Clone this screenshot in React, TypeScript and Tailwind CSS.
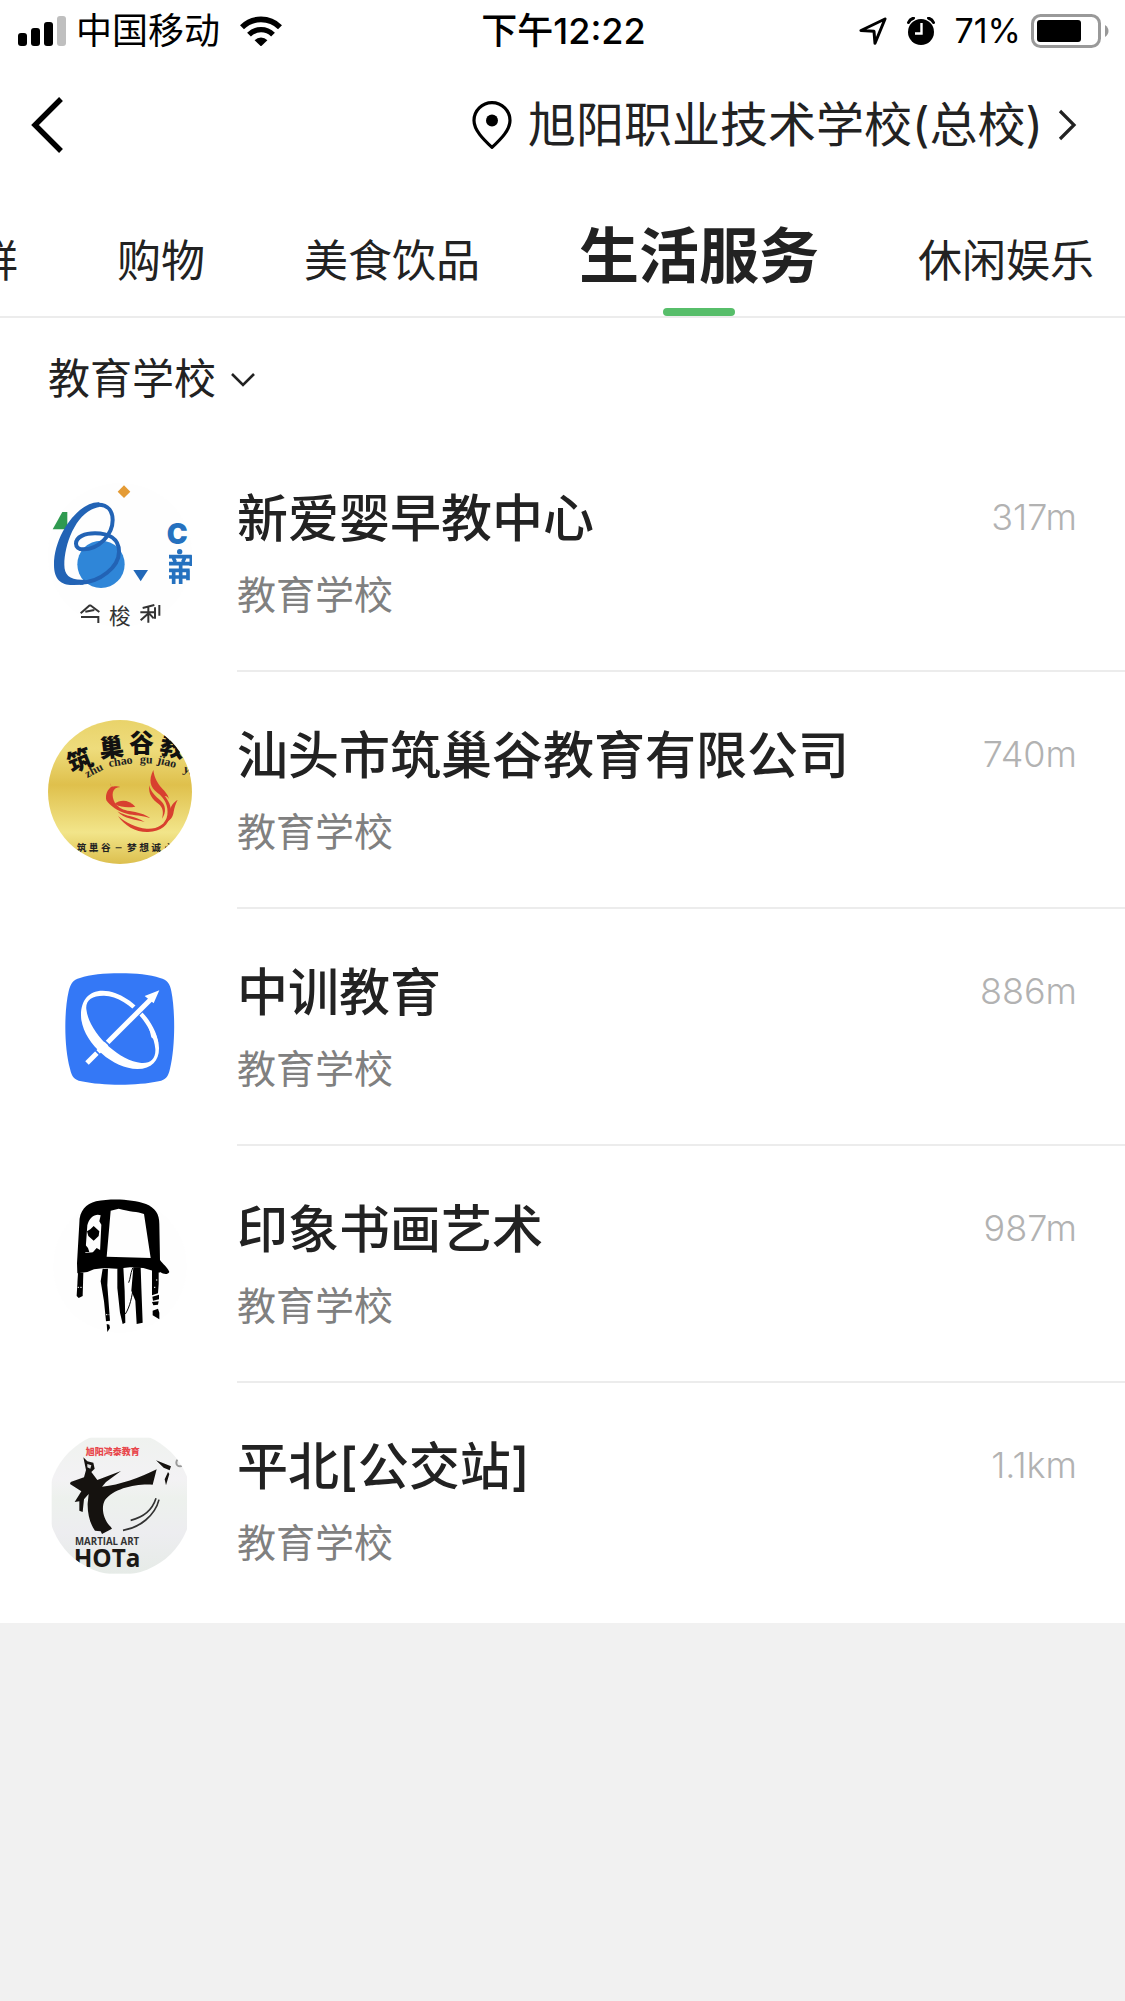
import React, { useState } from 'react';

const tabs = ['生鲜', '购物', '美食饮品', '生活服务', '休闲娱乐'];

function SignalIcon() {
  return (
    <svg className="w-12 h-[30px]" viewBox="0 0 48 30" aria-hidden="true">
      <rect x="0" y="17" width="9" height="13" rx="3" />
      <rect x="13" y="12" width="9" height="18" rx="3" />
      <rect x="26" y="6" width="9" height="24" rx="3" />
      <rect x="39" y="0" width="9" height="30" rx="3" fill="#bfbfbf" />
    </svg>
  );
}

function WifiIcon() {
  return (
    <svg className="w-[42px] h-[30px]" viewBox="0 0 42 30" fill="none" stroke="#000" aria-hidden="true">
      <path d="M2 11.2a27 27 0 0 1 38 0" strokeWidth="5.6" />
      <path d="M9 18.6a17 17 0 0 1 24 0" strokeWidth="5.4" />
      <path d="M14.6 24.2a9.2 9.2 0 0 1 12.8 0L21 30.4z" fill="#000" stroke="none" />
    </svg>
  );
}

function ArrowIcon() {
  return (
    <svg className="w-7 h-7" viewBox="0 0 28 28" fill="none" stroke="#000" strokeWidth="3" strokeLinejoin="round" aria-hidden="true">
      <path d="M26 2L2 13.500l13 .8 1 12z" />
    </svg>
  );
}

function AlarmIcon() {
  return (
    <svg className="w-7 h-7" viewBox="0 0 28 28" aria-hidden="true">
      <circle cx="14" cy="15" r="13" />
      <path d="M1.5 5.5Q3 2 6.5 1.2M26.5 5.5Q25 2 21.5 1.2" fill="none" stroke="#000" strokeWidth="3" strokeLinecap="round" />
      <path d="M14.5 6v10.5H8" fill="none" stroke="#fff" strokeWidth="2.4" />
    </svg>
  );
}

function BatteryIcon() {
  return (
    <svg className="w-[78px] h-[34px]" viewBox="0 0 78 34" aria-hidden="true">
      <rect x="1.5" y="1.5" width="67" height="31" rx="8" fill="none" stroke="#999" strokeWidth="3" />
      <path d="M74 11q3.5 2.5 3.5 6T74 23z" fill="#999" />
      <rect x="6" y="6" width="44" height="22" rx="3" />
    </svg>
  );
}

function StatusBar() {
  return (
    <div className="grid h-[62px] grid-cols-[1fr_auto_1fr] items-center pl-[18px] pr-4 text-[36px] leading-none text-black">
      <div className="flex items-center">
        <SignalIcon />
        <span className="ml-2.5 mr-5">中国移动</span>
        <WifiIcon />
      </div>
      <span className="font-medium">下午12:22</span>
      <div className="flex items-center justify-end">
        <ArrowIcon />
        <span className="w-5" />
        <AlarmIcon />
        <span className="ml-5 mr-2.5 text-[34px]">71%</span>
        <BatteryIcon />
      </div>
    </div>
  );
}

function Header() {
  return (
    <header className="flex h-[126px] items-center justify-between pl-[31px] pr-12">
      <button type="button" aria-label="返回">
        <svg className="h-14 w-8" viewBox="0 0 32 56" fill="none" stroke="#000" strokeWidth="5.4">
          <path d="M30 2L4 28l26 26" />
        </svg>
      </button>
      <button type="button" className="flex items-center text-[48px] leading-none">
        <svg className="mr-4 h-12 w-10" viewBox="0 0 40 48" fill="none" stroke="#000" strokeWidth="3.2" aria-hidden="true">
          <path d="M20 46.4C11 38 2 29 2 19.5a18 17.8 0 0 1 36 0C38 29 29 38 20 46.4z" strokeLinejoin="round" />
          <circle cx="20" cy="19.5" r="6" fill="#000" stroke="none" />
        </svg>
        <span>旭阳职业技术学校(总校)</span>
        <svg className="ml-3.5 h-8 w-5" viewBox="0 0 20 32" fill="none" stroke="#222" strokeWidth="3.2" aria-hidden="true">
          <path d="M3 2l14 14L3 30" />
        </svg>
      </button>
    </header>
  );
}

function KidsAvatar() {
  return (
    <svg viewBox="54 39 432 432" className="h-full w-full">
      <circle cx="270" cy="255" r="216" fill="#fefefe" />
      <path d="M282 46l19 19-19 19-19-19z" fill="#e49b35" />
      <path d="M97 126h15v52H68z" fill="#2f9a50" />
      <circle cx="213" cy="283" r="71" fill="#2f86d8" />
      <path
        d="M205 104C235 104 248 125 248 150C248 195 205 238 160 238C145 238 138 230 138 221C138 200 165 190 195 190C235 190 267 205 267 245C267 290 210 338 150 338"
        fill="none"
        stroke="#2263b5"
        strokeWidth="12"
      />
      <path d="M208 97C150 93 72 190 72 285C72 330 95 346 130 345L160 344L165 329C120 332 103 316 103 285C103 220 140 122 208 111z" fill="#2263b5" />
      <path d="M310 300h44l-22 34z" fill="#2268b8" />
      <text x="410" y="221" fontSize="84" fontWeight="900" fill="#2571bf">C</text>
      <circle cx="449" cy="245" r="8" fill="#2571bf" />
      <path
        d="M417 260h68M430 264l6 12M464 264l-6 12M417 281h68M417 301h62M431 301v41M452 281v61M417 321h58M474 301v30M484 256v32"
        stroke="#2571bf"
        strokeWidth="11"
        fill="none"
      />
      <g stroke="#333" strokeWidth="6" fill="none">
        <path d="M180 405l-28 25M180 405l28 21M166 425l27-5M153 441h52v18" />
        <path d="M373 405l-35 9M355 410v48M331 427h42M354 431l-22 20M358 431l13 14M375 412v34M388 405v32" />
      </g>
      <text x="237" y="461" fontSize="65" fill="#333">梭</text>
    </svg>
  );
}

function PhoenixAvatar() {
  return (
    <svg viewBox="54 60 432 432" className="h-full w-full">
      <defs>
        <linearGradient id="gold" x1="0" y1="0" x2="0" y2="1">
          <stop offset="0" stopColor="#e9d36a" />
          <stop offset="0.2" stopColor="#eedc7c" />
          <stop offset="0.45" stopColor="#dfc04c" />
          <stop offset="0.78" stopColor="#f2e58a" />
          <stop offset="1" stopColor="#dcbf4e" />
        </linearGradient>
        <clipPath id="coin">
          <circle cx="270" cy="276" r="216" />
        </clipPath>
      </defs>
      <g clipPath="url(#coin)">
        <rect x="54" y="60" width="432" height="432" fill="url(#gold)" />
        <g fontSize="74" fontWeight="900" fill="#111">
          <text x="125" y="220" transform="rotate(-22 125 220)">筑</text>
          <text x="211" y="174" transform="rotate(-7 211 174)">巢</text>
          <text x="298" y="157">谷</text>
          <text x="386" y="160" transform="rotate(12 386 160)">教</text>
        </g>
        <g fontSize="36" fontWeight="700" fill="#222" className="[font-family:'Liberation_Serif',serif]">
          <text x="172" y="234" transform="rotate(-27 172 234)">zhu</text>
          <text x="238" y="201" transform="rotate(-9 238 201)">chao</text>
          <text x="329" y="189" transform="rotate(3 329 189)">gu</text>
          <text x="380" y="190" transform="rotate(14 380 190)">jiao</text>
          <text x="458" y="216" transform="rotate(20 458 216)">yu</text>
        </g>
        <g fill="#d8402f">
          <path d="M370 210C355 240 360 262 382 278C404 294 416 318 412 345C408 375 380 388 350 386C318 384 288 368 264 348C284 378 318 397 354 396C394 394 416 374 422 344C426 318 414 300 404 288C412 288 416 294 417 299C414 270 376 262 370 210z" />
          <path d="M358 256c-4 26 10 44 28 56 12 10 16 24 10 44 14-18 12-42-6-56-14-12-28-24-32-44z" />
          <path d="M443 299c-18 12-22 24-26 40-2 12-8 22-16 30 20-6 28-18 30-34 2-12 6-24 12-36z" />
          <path d="M254 312c16-14 42-14 62 8-22 4-44 2-62-8z" />
          <path d="M240 250c2 8 8 11 13 9 6-1 11-1 18 2-26 0-28 26-16 48 10 14 26 22 44 24 22 4 46 8 62 22-26-10-48-8-70-14-26-6-52-24-62-40-4-18 4-34 18-42-5-2-7-4-7-9z" />
          <path d="M262 334c26 16 54 14 82 32-30-8-60-8-82-32z" />
        </g>
        <g fontSize="29" fontWeight="700" fill="#222">
          <text x="140" y="453">筑</text>
          <text x="176" y="453">巢</text>
          <text x="213" y="453">谷</text>
          <path d="M257 442h18v3h-18z" />
          <text x="291" y="453">梦</text>
          <text x="328" y="453">想</text>
          <text x="364" y="453">诚</text>
          <text x="403" y="453">心</text>
        </g>
      </g>
    </svg>
  );
}

function OrbitAvatar() {
  return (
    <svg viewBox="-6 21 432 432" className="h-full w-full">
      <path d="M210 70c48 0 90 4 120 14 22 6 30 16 34 40 12 60 12 168-4 232-6 26-12 32-34 38-66 14-166 14-232 0-22-6-28-12-34-38-18-64-18-172-4-232 6-24 12-34 34-40 30-10 72-14 120-14z" fill="#3478f6" />
      <path
        fill="#fff"
        fillRule="evenodd"
        d="M158 122C110 122 88 160 94 210c12 74 96 146 168 147 44 0 66-26 65-64-2-72-88-170-169-171zM160 137c68-2 150 86 156 160 2 28-14 44-42 42C204 332 116 246 109 178c-3-26 16-41 51-41z"
      />
      <path d="M304 262C298 226 276 190 246 166L258 174C288 198 318 240 325 280z" fill="#fff" />
      <path d="M220 224L300 144" stroke="#3478f6" strokeWidth="30" />
      <path d="M111 339L304 146" stroke="#fff" strokeWidth="15" />
      <path d="M328 121l-44 17 27 22z" fill="#fff" />
      <path d="M131 296l20 20M160 269l22 20" stroke="#3478f6" strokeWidth="5" />
    </svg>
  );
}

function InkAvatar() {
  return (
    <svg viewBox="-6 42 432 432" className="h-full w-full">
      <circle cx="210" cy="258" r="200" fill="#fefefe" />
      <path
        fillRule="evenodd"
        d="M88 130c0-38 20-58 50-66 50-10 110-6 150 8 28 12 40 30 40 60l2 108c8 12 22 20 28 36-6 10-18 6-28 0l-2 2-48-14-40-2-40 4-36-2-32 4-20 8-30 4-1-30zM182 92L170 230l132 4L282 102C262 94 240 96 206 86zM152 106C136 100 118 112 112 136L106 218L150 216L154 134L148 124z"
      />
      <path d="M131 138l17 16-2 14-15 14-16-14-4-14 10-6zM104 192l10 12 4 12h-14zM140 204l14 8v10h-30z" />
      <path d="M84 278h16l-2 70-12 6-6-6z" />
      <path d="M158 266h16l-2 50 8 106-12 2-6-60-10-60zM202 262h18l4 70 2 96-8 4-8-34-8-74zM250 262h22l2 60 4 106-18 4-4-70-12-30zM306 268h20v44l-2 28-18 6z" />
      <path d="M307 350l20-6v14l-18 4zM306 366l20-2-2 10-14 2zM308 392l16-6 4 12v20l-20-12z" />
      <path d="M248 264c-8 20-6 30-12 44M250 320c-4 30-10 60-24 82" fill="none" stroke="#000" strokeWidth="3" />
      <path d="M83 322h12M312 322h8M168 404h10M318 300h8" stroke="#fff" strokeWidth="3" strokeDasharray="4 4" />
      <path d="M170 432l8 2 2 10-8 12zM268 438l6 6z" />
    </svg>
  );
}

function MartialAvatar() {
  return (
    <svg viewBox="24 33 432 432" className="h-full w-full">
      <defs>
        <linearGradient id="haze" x1="0" y1="0" x2="0" y2="1">
          <stop offset="0" stopColor="#eff2ef" />
          <stop offset="0.3" stopColor="#f3f2f4" />
          <stop offset="0.45" stopColor="#edf1ed" />
          <stop offset="0.7" stopColor="#ededf0" />
          <stop offset="1" stopColor="#e6ebe7" />
        </linearGradient>
        <clipPath id="disc">
          <circle cx="240" cy="249" r="216" />
        </clipPath>
      </defs>
      <g clipPath="url(#disc)">
        <rect x="35" y="53" width="406" height="408" fill="url(#haze)" />
        <text x="137" y="106" fontSize="27" fontWeight="900" fill="#e8474c">旭阳鸿泰教育</text>
        <g fill="#15120f">
          <path d="M130 112L142 124L160 128L164 146L154 156L172 180L243 153L198 186L186 200C240 196 300 172 350 148L338 194C290 190 220 205 195 240C182 262 190 300 212 320L216 326L186 342L182 334L165 332C150 312 142 280 143 250L146 222L132 238L128 276L118 272L118 244L104 246L124 214L90 192L92 186L132 172L138 150z" />
          <path d="M348 121l45 18-4 12-18-8zM384 156l4 6-10 34-4-18z" />
        </g>
        <path d="M142 132l12 4-3 10-9-4z" fill="#ddd" />
        <path d="M272 301c34-8 64-28 76-66M249 331c50-8 96-44 108-92" fill="none" stroke="#333" strokeWidth="5" />
        <circle cx="420" cy="128" r="11" fill="none" stroke="#999" strokeWidth="6" />
        <g fontWeight="700" className="[font-family:'Open_Sans',sans-serif]">
          <text x="105" y="375" fontSize="29" fill="#333">MARTIAL ART</text>
          <text x="101" y="442" fontSize="73" fill="#1b1815">HOTa</text>
        </g>
      </g>
    </svg>
  );
}

const places = [
  { name: '新爱婴早教中心', distance: '317m', Avatar: KidsAvatar },
  { name: '汕头市筑巢谷教育有限公司', distance: '740m', Avatar: PhoenixAvatar },
  { name: '中训教育', distance: '886m', Avatar: OrbitAvatar },
  { name: '印象书画艺术', distance: '987m', Avatar: InkAvatar },
  { name: '平北[公交站]', distance: '1.1km', Avatar: MartialAvatar },
];

export default function App() {
  const [active, setActive] = useState('生活服务');
  const [category, setCategory] = useState('教育学校');

  return (
    <div className="min-h-screen bg-[#f1f1f1] text-[#222] [font-family:Inter,'Noto_Sans_CJK_SC',sans-serif]">
      <div className="bg-white">
        <StatusBar />
        <Header />

        <nav className="flex h-[130px] justify-end overflow-hidden border-b-2 border-[#ececec] pr-[31px]">
          <div className="flex shrink-0 items-stretch gap-[99px]">
            {tabs.map((tab) => (
              <button
                key={tab}
                type="button"
                onClick={() => setActive(tab)}
                className="flex flex-col items-center justify-between whitespace-nowrap"
              >
                <span
                  className={
                    tab === active
                      ? 'text-[60px] leading-[136px] h-[120px] font-bold'
                      : 'text-[44px] leading-[146px] h-[120px]'
                  }
                >
                  {tab}
                </span>
                {tab === active && <span className="h-2 w-[72px] rounded-full bg-[#57be6a]" />}
              </button>
            ))}
          </div>
        </nav>

        <div className="flex h-[117px] items-center pl-12 pt-1">
          <label className="flex items-center">
            <span className="sr-only">分类</span>
            <select
              value={category}
              onChange={(e) => setCategory(e.target.value)}
              className="appearance-none bg-transparent text-[42px] leading-[60px]"
            >
              <option>教育学校</option>
            </select>
            <svg className="ml-3.5 h-4 w-6" viewBox="0 0 24 16" fill="none" stroke="#222" strokeWidth="2.6" aria-hidden="true">
              <path d="M1 3l11 11L23 3" />
            </svg>
          </label>
        </div>

        <ul>
          {places.map(({ name, distance, Avatar }) => (
            <li key={name} className="group flex pl-12">
              <div className="mt-12 mr-[45px] h-36 w-36 shrink-0">
                <Avatar />
              </div>
              <div className="flex h-[237px] min-w-0 flex-1 justify-between border-b-2 border-[#ececec] pt-12 pr-12 group-last:h-60 group-last:border-b-0">
                <div>
                  <h2 className="text-[51px] font-medium leading-[72px]">{name}</h2>
                  <p className="mt-2.5 text-[39px] leading-[60px] text-[#808080]">教育学校</p>
                </div>
                <span className="text-[36px] font-light leading-[68px] text-[#b2b2b2]">{distance}</span>
              </div>
            </li>
          ))}
        </ul>
      </div>
    </div>
  );
}
